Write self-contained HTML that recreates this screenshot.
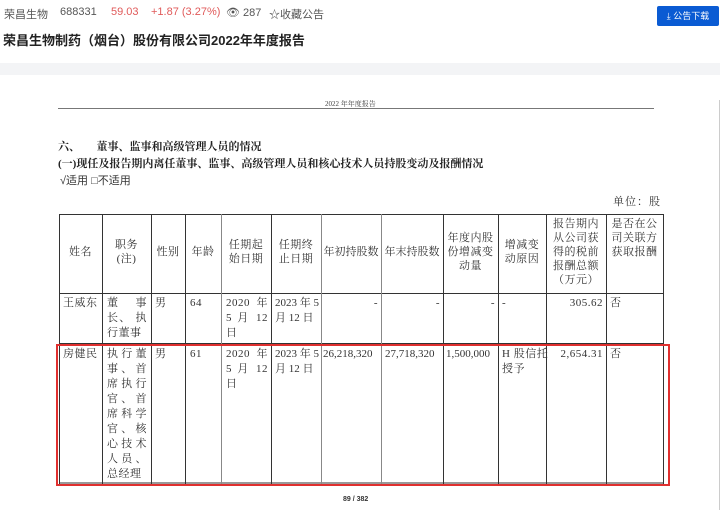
<!DOCTYPE html>
<html><head><meta charset="utf-8"><style>
*{margin:0;padding:0;box-sizing:border-box}
body{width:720px;height:510px;overflow:hidden;background:#fff;font-family:"Liberation Sans","Noto Sans CJK SC",sans-serif;position:relative}
.a{position:absolute;white-space:nowrap}
.serif{font-family:"Liberation Serif","Noto Serif CJK SC",serif;color:#222}
.v{position:absolute;width:1px;background:#333}
.h{position:absolute;height:1px;background:#333}
.c{position:absolute;font-family:"Liberation Serif","Noto Serif CJK SC",serif;font-size:11px;line-height:14px;color:#333;white-space:nowrap;letter-spacing:0.5px}
.j{display:block;text-align:justify;text-align-last:justify;height:15px;line-height:15px}
</style></head><body>
<div class="a" style="left:4px;top:6px;font-size:11px;color:#555">荣昌生物</div>
<div class="a" style="left:60px;top:6px;font-size:11px;color:#555">688331</div>
<div class="a" style="left:111px;top:6px;font-size:11px;color:#e05a5a">59.03</div>
<div class="a" style="left:151px;top:6px;font-size:11px;color:#e05a5a">+1.87 (3.27%)</div>
<div class="a" style="left:226px;top:6px;font-size:11px;color:#555">👁 287</div>
<div class="a" style="left:269px;top:6px;font-size:11px;color:#555">☆收藏公告</div>
<div class="a" style="left:3px;top:30px;font-size:13px;font-weight:bold;color:#222">荣昌生物制药（烟台）股份有限公司2022年年度报告</div>
<div class="a" style="left:657px;top:6px;width:62px;height:20px;background:#0a5bd3;border-radius:2px;color:#fff;font-size:9px;line-height:20px;text-align:center">⤓ 公告下载</div>
<div class="a" style="left:0;top:63px;width:720px;height:12px;background:#f3f4f6"></div>
<div class="a" style="left:719px;top:100px;width:1px;height:410px;background:#ccc"></div>
<div class="a serif" style="left:325px;top:99px;font-size:7px;color:#444">2022 年年度报告</div>
<div class="h" style="left:58px;top:108px;width:596px;background:#777"></div>
<div class="a serif" style="left:58px;top:138px;font-size:11px;font-weight:bold">六、&nbsp;&nbsp;&nbsp;&nbsp;&nbsp;&nbsp;董事、监事和高级管理人员的情况</div>
<div class="a serif" style="left:58px;top:155px;font-size:11px;font-weight:bold">(一)现任及报告期内离任董事、监事、高级管理人员和核心技术人员持股变动及报酬情况</div>
<div class="a" style="left:60px;top:172px;font-size:11px;color:#333">√适用 □不适用</div>
<div class="a serif" style="left:613px;top:193px;font-size:11px;color:#333;letter-spacing:1px">单位：股</div>
<div class="h" style="left:59px;top:214px;width:605px"></div>
<div class="h" style="left:59px;top:293px;width:605px"></div>
<div class="h" style="left:59px;top:343px;width:605px"></div>
<div class="h" style="left:59px;top:482px;width:605px;height:2px;background:#999"></div>
<div class="v" style="left:59px;top:214px;height:270px"></div>
<div class="v" style="left:102px;top:214px;height:270px"></div>
<div class="v" style="left:151px;top:214px;height:270px"></div>
<div class="v" style="left:185px;top:214px;height:270px"></div>
<div class="v" style="left:221px;top:214px;height:270px;background:#888"></div>
<div class="v" style="left:271px;top:214px;height:270px"></div>
<div class="v" style="left:321px;top:214px;height:270px;background:#888"></div>
<div class="v" style="left:381px;top:214px;height:270px;background:#888"></div>
<div class="v" style="left:443px;top:214px;height:270px"></div>
<div class="v" style="left:498px;top:214px;height:270px"></div>
<div class="v" style="left:546px;top:214px;height:270px"></div>
<div class="v" style="left:606px;top:214px;height:270px"></div>
<div class="v" style="left:663px;top:214px;height:270px"></div>
<div class="a" style="left:56px;top:344px;width:614px;height:142px;border:2px solid #e0302f"></div>
<div class="c" style="left:59px;top:245px;width:43px;text-align:center">姓名</div>
<div class="c" style="left:102px;top:238px;width:49px;text-align:center">职务<br>(注)</div>
<div class="c" style="left:151px;top:245px;width:34px;text-align:center">性别</div>
<div class="c" style="left:185px;top:245px;width:36px;text-align:center">年龄</div>
<div class="c" style="left:221px;top:238px;width:50px;text-align:center">任期起<br>始日期</div>
<div class="c" style="left:271px;top:238px;width:50px;text-align:center">任期终<br>止日期</div>
<div class="c" style="left:321px;top:245px;width:60px;text-align:center;letter-spacing:0">年初持股数</div>
<div class="c" style="left:381px;top:245px;width:62px;text-align:center;letter-spacing:0">年末持股数</div>
<div class="c" style="left:443px;top:231px;width:55px;text-align:center">年度内股<br>份增减变<br>动量</div>
<div class="c" style="left:498px;top:238px;width:48px;text-align:center">增减变<br>动原因</div>
<div class="c" style="left:546px;top:217px;width:60px;text-align:center">报告期内<br>从公司获<br>得的税前<br>报酬总额<br>（万元）</div>
<div class="c" style="left:606px;top:217px;width:57px;text-align:center">是否在公<br>司关联方<br>获取报酬</div>
<div class="c" style="left:63px;top:296px">王威东</div>
<div class="c" style="left:107px;top:296px;width:40px"><span class="j">董 事</span><span class="j">长、 执</span><span style="display:block;line-height:15px">行董事</span></div>
<div class="c" style="left:155px;top:296px">男</div>
<div class="c" style="left:190px;top:296px">64</div>
<div class="c" style="left:226px;top:296px;width:42px"><span class="j">2020 年</span><span class="j">5 月 12</span><span class="j" style="text-align-last:left">日</span></div>
<div class="c" style="left:275px;top:296px;line-height:15px;letter-spacing:0">2023 年 5<br>月 12 日</div>
<div class="c" style="left:321px;top:296px;width:57px;text-align:right">-</div>
<div class="c" style="left:381px;top:296px;width:59px;text-align:right">-</div>
<div class="c" style="left:443px;top:296px;width:52px;text-align:right">-</div>
<div class="c" style="left:502px;top:296px">-</div>
<div class="c" style="left:546px;top:296px;width:57px;text-align:right">305.62</div>
<div class="c" style="left:610px;top:296px">否</div>
<div class="c" style="left:63px;top:347px">房健民</div>
<div class="c" style="left:107px;top:347px;width:40px"><span class="j">执行董</span><span class="j">事、首</span><span class="j">席执行</span><span class="j">官、首</span><span class="j">席科学</span><span class="j">官、核</span><span class="j">心技术</span><span class="j">人员、</span><span style="display:block;line-height:15px">总经理</span></div>
<div class="c" style="left:155px;top:347px">男</div>
<div class="c" style="left:190px;top:347px">61</div>
<div class="c" style="left:226px;top:347px;width:42px"><span class="j">2020 年</span><span class="j">5 月 12</span><span class="j" style="text-align-last:left">日</span></div>
<div class="c" style="left:275px;top:347px;line-height:15px;letter-spacing:0">2023 年 5<br>月 12 日</div>
<div class="c" style="left:323px;top:347px;letter-spacing:0">26,218,320</div>
<div class="c" style="left:385px;top:347px;letter-spacing:0">27,718,320</div>
<div class="c" style="left:446px;top:347px;letter-spacing:0">1,500,000</div>
<div class="c" style="left:502px;top:347px;line-height:15px">H 股信托<br>授予</div>
<div class="c" style="left:546px;top:347px;width:57px;text-align:right">2,654.31</div>
<div class="c" style="left:610px;top:347px">否</div>
<div class="a" style="left:343px;top:496px;font-size:7px;font-weight:bold;color:#333">89 / 382</div>
</body></html>
